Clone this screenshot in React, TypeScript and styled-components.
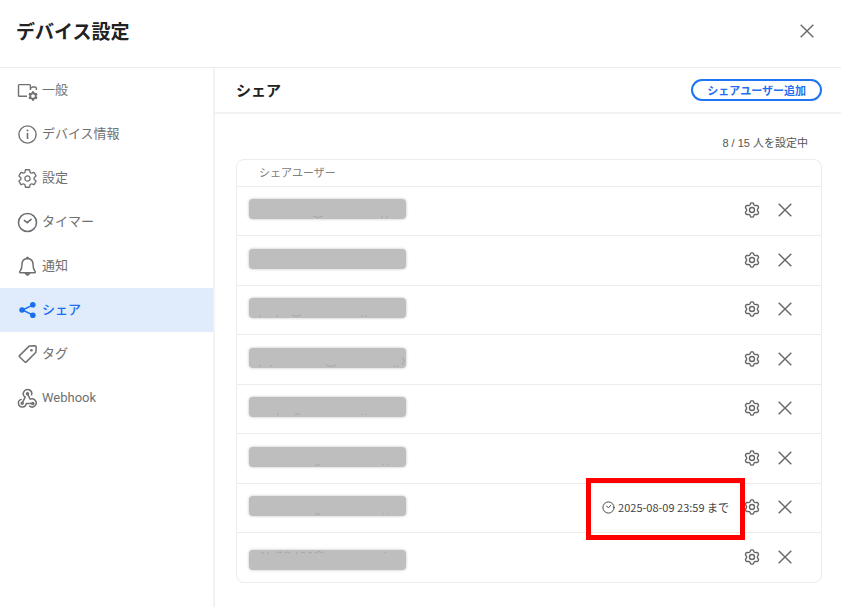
import React from 'react';
import styled, { createGlobalStyle, css } from 'styled-components';
import { IoSettingsOutline } from 'react-icons/io5';

const GlobalStyle = createGlobalStyle`
  *, *::before, *::after { box-sizing: border-box; }
  body {
    margin: 0;
    background: #fff;
    color: #555;
    font-family: 'Noto Sans CJK JP', 'Noto Sans', sans-serif;
    font-size: 13px;
    line-height: 20px;
  }
  button { font: inherit; color: inherit; }
`;

const Dialog = styled.div`
  display: flex;
  flex-direction: column;
  min-height: 100vh;
`;

const TitleBar = styled.header`
  display: flex;
  align-items: center;
  justify-content: space-between;
  height: 68px;
  padding: 0 24px 6px 16px;
  border-bottom: 1px solid #ececec;
`;

const Title = styled.h1`
  margin: 0;
  color: #222;
  font-size: 19px;
  line-height: 28px;
  font-weight: 700;
`;

const IconButton = styled.button`
  display: flex;
  align-items: center;
  justify-content: center;
  flex: none;
  width: 20px;
  height: 20px;
  padding: 0;
  border: 0;
  background: none;
  color: #666;
  cursor: pointer;
`;

const Body = styled.div`
  display: flex;
  flex: 1;
`;

const Sidebar = styled.nav`
  flex: none;
  width: 215px;
  border-right: 2px solid #f2f2f2;
`;

const NavList = styled.ul`
  margin: 0;
  padding: 0;
  list-style: none;
`;

const NavLink = styled.a<{ $active: boolean }>`
  display: flex;
  align-items: center;
  gap: 4px;
  height: 44px;
  padding-left: 17px;
  color: #707070;
  font-family: Roboto, 'Noto Sans CJK JP', sans-serif;
  text-decoration: none;
  ${(p) =>
    p.$active &&
    css`
      background: #e0ebfc;
      color: #1a6ff0;
      font-weight: 500;
    `}
  svg {
    flex: none;
  }
`;

const Main = styled.main`
  flex: 1;
  min-width: 0;
`;

const SectionBar = styled.div`
  display: flex;
  align-items: center;
  justify-content: space-between;
  height: 46px;
  padding: 0 19px 0 21px;
  border-bottom: 2px solid #f2f2f2;
`;

const SectionTitle = styled.h2`
  margin: 0;
  color: #222;
  font-size: 15px;
  line-height: 20px;
  font-weight: 700;
`;

const AddButton = styled.button`
  height: 22px;
  padding: 0 14px;
  border: 2px solid #1f74f2;
  border-radius: 11px;
  background: #fff;
  color: #1f6fee;
  font-size: 11px;
  line-height: 16px;
  font-weight: 700;
  cursor: pointer;
`;

const Content = styled.div`
  padding: 19px 19px 24px 21px;
`;

const Count = styled.p`
  margin: 0;
  padding: 0 14px 6px 0;
  text-align: right;
  font-family: 'Liberation Sans', 'Noto Sans CJK JP', sans-serif;
  font-size: 11px;
`;

const UserTable = styled.table`
  width: 100%;
  border: 1px solid #ececec;
  border-radius: 8px;
  border-spacing: 0;
`;

const HeadCell = styled.th`
  height: 26px;
  padding: 0 0 2px 22px;
  text-align: left;
  color: #808080;
  font-size: 11px;
  line-height: 16px;
  font-weight: 400;
`;

const Row = styled.tr`
  height: 49px;
  &:nth-child(even) {
    height: 50px;
  }
`;

const Cell = styled.td`
  padding: 0 0 2px;
  border-top: 1px solid #ececec;
`;

const NameCell = styled(Cell)<{ $low?: boolean }>`
  padding: ${(p) => (p.$low ? '4px 0 0 12px' : '0 0 4px 12px')};
`;

const MaskedName = styled.div`
  width: 157px;
  height: 20px;
  border-radius: 4px;
  background: #bebebe;
  box-shadow: 0 0 3px #bebebe;
  svg {
    display: block;
  }
`;

const Actions = styled.div`
  display: flex;
  align-items: center;
  justify-content: flex-end;
  gap: 13px;
  padding-right: 26px;
`;

const Expiry = styled.span`
  position: relative;
  display: flex;
  align-items: center;
  gap: 3px;
  color: #444;
  font-size: 11px;
  line-height: 16px;
`;

const Highlight = styled.span`
  position: absolute;
  inset: -21px -16px -25px;
  border: 5px solid #f00;
  pointer-events: none;
`;

const Cross = () => (
  <svg width="14" height="14" viewBox="0 0 14 14" fill="none" stroke="currentColor" strokeWidth="1.4" aria-hidden="true">
    <path d="M.7.7l12.6 12.6M13.3.7L.7 13.3" />
  </svg>
);

const gearPoints = Array.from({ length: 72 }, (_, i) => {
  const angle = (i * Math.PI) / 36;
  const radius = 6.3 + 0.9 * Math.tanh(1.8 * Math.cos(6 * angle));
  return `${(9 + radius * Math.sin(angle)).toFixed(2)},${(9 - radius * Math.cos(angle)).toFixed(2)}`;
}).join(' ');

const GearIcon = () => (
  <svg width="18" height="18" viewBox="0 0 18 18" fill="none" stroke="currentColor" strokeWidth="1.4" strokeLinejoin="round" aria-hidden="true">
    <polygon points={gearPoints} />
    <circle cx="9" cy="9" r="2.5" />
  </svg>
);

const ClockIcon = ({ size }: { size: number }) => (
  <svg width={size} height={size} viewBox="0 0 20 20" fill="none" stroke="currentColor" strokeWidth="1.5" strokeLinecap="round" aria-hidden="true">
    <circle cx="10" cy="10" r="8.6" />
    <path d="M7 8l2.8 2.2L13.4 7" />
  </svg>
);

const GeneralIcon = () => (
  <svg width="21" height="22" viewBox="0 0 21 22" fill="none" stroke="currentColor" strokeWidth="1.4" strokeLinejoin="round" aria-hidden="true">
    <path d="M10 17.2H2.3Q1.5 17.2 1.5 16.4V6.4Q1.5 5.6 2.3 5.6H12.6Q13.4 5.6 13.4 6.4V11" />
    <path d="M13.4 9.4l2-1.4H18Q19.4 8.2 19.4 9.6V11" />
    <circle cx="16" cy="17" r="2.8" strokeWidth="1.9" />
    <path strokeWidth="2" d="M16 12.2v2M16 19.8v2M11.9 14.6l1.7 1M18.4 18.4l1.7 1M11.9 19.4l1.7-1M18.4 15.6l1.7-1" />
  </svg>
);

const InfoIcon = () => (
  <svg width="21" height="21" viewBox="0 0 21 21" fill="none" stroke="currentColor" strokeWidth="1.4" aria-hidden="true">
    <circle cx="10.5" cy="10.5" r="8.6" />
    <path d="M10.5 9v6" strokeWidth="1.6" />
    <circle cx="10.5" cy="6.5" r="1" fill="currentColor" stroke="none" />
  </svg>
);

const BellIcon = () => (
  <svg width="21" height="21" viewBox="0 0 21 21" fill="none" stroke="currentColor" strokeWidth="1.5" strokeLinejoin="round" aria-hidden="true">
    <path d="M10.5 2.4C7 2.6 5 5.2 5 8.4C5 12.4 4.2 13.8 2.8 15.6Q2.4 16.6 3.4 16.8H17.6Q18.6 16.6 18.2 15.6C16.8 13.8 16 12.4 16 8.4C16 5.2 14 2.6 10.5 2.4Z" />
    <path d="M9.4 2.4Q10.5.2 11.6 2.4" />
    <path d="M8 17.4Q10.5 21.4 13 17.4Z" fill="currentColor" strokeWidth="1" />
  </svg>
);

const ShareIcon = () => (
  <svg width="21" height="20" viewBox="0 0 21 20" fill="currentColor" stroke="currentColor" strokeWidth="1.5" aria-hidden="true">
    <path d="M16 4.8L5.5 10L16 15.2" fill="none" />
    <g stroke="none">
      <circle cx="15.8" cy="4.8" r="2.8" />
      <circle cx="5.1" cy="10" r="2.8" />
      <circle cx="15.8" cy="15.2" r="2.8" />
    </g>
  </svg>
);

const TagIcon = () => (
  <svg width="21" height="20" viewBox="0 0 21 20" fill="none" stroke="currentColor" strokeWidth="1.5" strokeLinejoin="round" aria-hidden="true">
    <path d="M12.4 1.9L17.9 1.7Q19.2 1.7 19.2 3L18.9 8.3L9.1 18.1Q8.5 18.6 7.9 18L2.5 12.8Q1.9 12.2 2.5 11.6Z" />
    <circle cx="14.4" cy="6.2" r="1.3" fill="currentColor" stroke="none" />
  </svg>
);

const WebhookIcon = () => (
  <svg width="21" height="21" viewBox="0 0 21 21" fill="none" stroke="currentColor" strokeWidth="1.5" strokeLinecap="round" strokeLinejoin="round" aria-hidden="true">
    <path d="M14.6 6.8A4.2 4.2 0 1 0 8.2 9.2L5.8 13.8" />
    <path d="M4.2 11.4A3.9 3.9 0 1 0 9.2 15.6H15" />
    <path d="M10.5 6L13.2 11.2A4.1 4.1 0 1 1 12.6 18.2" />
    <circle cx="10.5" cy="5.8" r="1" />
    <circle cx="5.2" cy="15.2" r="1" />
    <circle cx="15.8" cy="15.4" r="1" />
  </svg>
);

const navItems = [
  { label: '一般', icon: <GeneralIcon /> },
  { label: 'デバイス情報', icon: <InfoIcon /> },
  { label: '設定', icon: <IoSettingsOutline size={21} /> },
  { label: 'タイマー', icon: <ClockIcon size={21} /> },
  { label: '通知', icon: <BellIcon /> },
  { label: 'シェア', icon: <ShareIcon />, active: true },
  { label: 'タグ', icon: <TagIcon /> },
  { label: 'Webhook', icon: <WebhookIcon /> },
];

type User = { id: number; marks: string; low?: boolean; until?: string };

const users: User[] = [
  { id: 1, marks: 'M64 17q5 3 10 0M134 17l-2 2M139 17l-2 2' },
  { id: 2, marks: '' },
  { id: 3, marks: 'M12 17l-2 2M29 17l-2 2M43 17q5 3 9 0M114 17l-2 2M118 17l-2 2' },
  { id: 4, marks: 'M12 17l-2 2M23 17l-2 2M77 17q5 3 10 0M147 17l-2 2M150 17l-2 2M153 9q4 4 0 8' },
  { id: 5, marks: 'M30 17l-2 1M46 17h5M113 17l1 1M118 17l-1 1' },
  { id: 6, marks: 'M66 18h5M134 17l1 1M139 17l-1 1' },
  { id: 7, marks: 'M66 18h5M134 17l1 1M139 17l-1 1', until: '2025-08-09 23:59 まで' },
  { id: 8, marks: 'M12 3h3M19 2v2M28 3q3-2 5 0M36 3q3-2 5 0M48 2v2M52 3q2-2 4 0M59 3q2-2 4 0M66 3q4-3 8 0M136 2v1', low: true },
];

export default function App() {
  return (
    <>
      <GlobalStyle />
      <Dialog role="dialog" aria-labelledby="dialog-title">
        <TitleBar>
          <Title id="dialog-title">デバイス設定</Title>
          <IconButton type="button" aria-label="閉じる">
            <Cross />
          </IconButton>
        </TitleBar>
        <Body>
          <Sidebar>
            <NavList>
              {navItems.map((item) => (
                <li key={item.label}>
                  <NavLink href="#" $active={!!item.active} aria-current={item.active ? 'page' : undefined}>
                    {item.icon}
                    <span>{item.label}</span>
                  </NavLink>
                </li>
              ))}
            </NavList>
          </Sidebar>
          <Main>
            <SectionBar>
              <SectionTitle>シェア</SectionTitle>
              <AddButton type="button">シェアユーザー追加</AddButton>
            </SectionBar>
            <Content>
              <Count>8 / 15 人を設定中</Count>
              <UserTable>
                <thead>
                  <tr>
                    <HeadCell colSpan={2} scope="col">シェアユーザー</HeadCell>
                  </tr>
                </thead>
                <tbody>
                  {users.map((user) => (
                    <Row key={user.id}>
                      <NameCell $low={user.low}>
                        <MaskedName>
                          <svg width="157" height="20" fill="none" stroke="#a6a6a6" aria-hidden="true">
                            <path d={user.marks} />
                          </svg>
                        </MaskedName>
                      </NameCell>
                      <Cell>
                        <Actions>
                          {user.until && (
                            <Expiry>
                              <ClockIcon size={13} />
                              {user.until}
                              <Highlight />
                            </Expiry>
                          )}
                          <IconButton type="button" aria-label="設定">
                            <GearIcon />
                          </IconButton>
                          <IconButton type="button" aria-label="削除">
                            <Cross />
                          </IconButton>
                        </Actions>
                      </Cell>
                    </Row>
                  ))}
                </tbody>
              </UserTable>
            </Content>
          </Main>
        </Body>
      </Dialog>
    </>
  );
}
